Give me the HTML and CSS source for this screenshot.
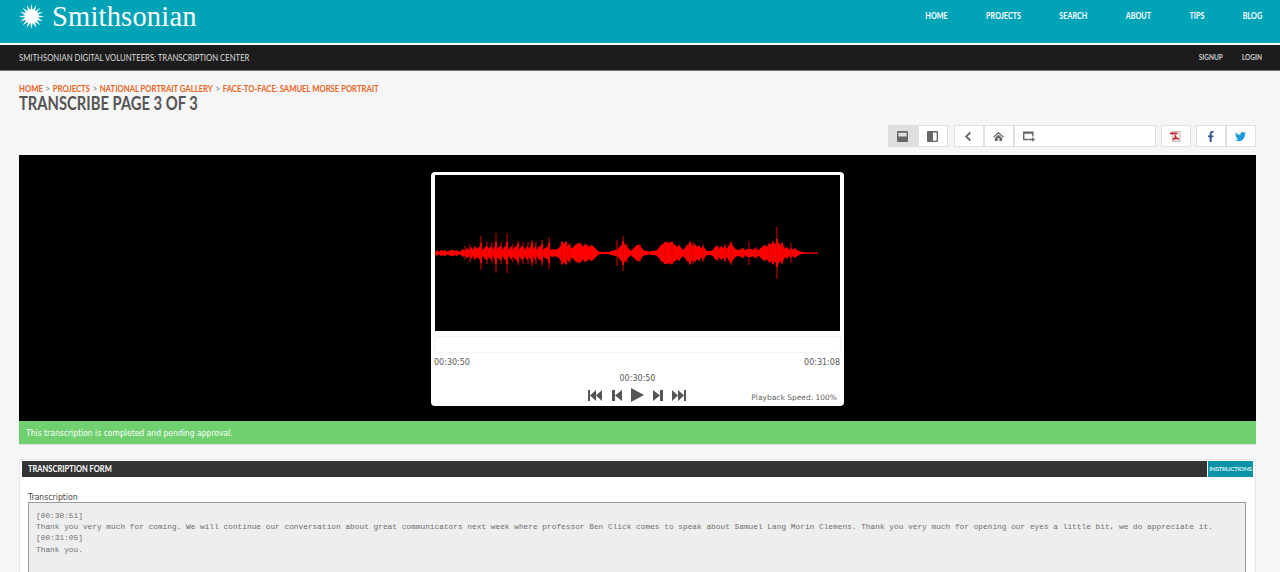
FILE: index.html
```html
<!DOCTYPE html>
<html lang="en">
<head>
<meta charset="utf-8">
<title>Transcribe Page 3 of 3</title>
<link rel="stylesheet" href="styles.css">
</head>
<body>
<header class="masthead">
  <a class="logo">
    <svg class="sun" viewBox="-14 -14 28 28" aria-hidden="true">
      <path fill="#fff" d="M0-13 1.270-6.370 5-12 3.610-5.400 9.200-9.200 5.400-3.610 12-5 6.370-1.270 13 0 6.370 1.270 12 5 5.400 3.610 9.200 9.200 3.610 5.400 5 12 1.270 6.370 0 13-1.270 6.370-5 12-3.610 5.400-9.200 9.200-5.400 3.610-12 5-6.370 1.270-13 0-6.370-1.270-12-5-5.400-3.610-9.200-9.200-3.610-5.400-5-12-1.270-6.370Z"/>
      <circle r="7" fill="#fff"/>
    </svg>
    <span class="wordmark">Smithsonian</span>
  </a>
  <nav class="mainnav">
    <a>HOME</a><a>PROJECTS</a><a>SEARCH</a><a>ABOUT</a><a>TIPS</a><a>BLOG</a>
  </nav>
</header>
<div class="subbar">
  <span class="subtitle">SMITHSONIAN DIGITAL VOLUNTEERS: TRANSCRIPTION CENTER</span>
  <nav class="usernav"><a>SIGNUP</a><a>LOGIN</a></nav>
</div>
<main class="page">
  <div class="crumbs"><a>HOME</a><i>&gt;</i><a>PROJECTS</a><i>&gt;</i><a>NATIONAL PORTRAIT GALLERY</a><i>&gt;</i><a>FACE-TO-FACE: SAMUEL MORSE PORTRAIT</a></div>
  <h1 class="title">TRANSCRIBE PAGE 3 OF 3</h1>

  <div class="toolbar">
    <div class="group first-group">
      <button class="tool active"><svg viewBox="0 0 12 12"><path fill="#666" fill-rule="evenodd" d="M1 0H11A1 1 0 0 1 12 1V11A1 1 0 0 1 11 12H1A1 1 0 0 1 0 11V1A1 1 0 0 1 1 0ZM1.500 2V6H10.500V2Z"/></svg></button>
      <button class="tool"><svg viewBox="0 0 12 12"><path fill="#666" fill-rule="evenodd" d="M1 0H11A1 1 0 0 1 12 1V11A1 1 0 0 1 11 12H1A1 1 0 0 1 0 11V1A1 1 0 0 1 1 0ZM6.500 1.500V10.500H10.500V1.500Z"/></svg></button>
    </div>
    <div class="group">
      <button class="tool"><svg viewBox="0 0 12 12"><path fill="none" stroke="#666" stroke-width="2" d="M8 1.500 3.500 6 8 10.500"/></svg></button>
      <button class="tool"><svg viewBox="0 0 12 12"><path fill="#666" d="M6 1 0 6.200 1 7.200 6 3 11 7.200 12 6.200ZM2 7.500V11H5V8H7V11H10V7.500L6 4Z"/></svg></button>
      <div class="gobox">
        <svg viewBox="0 0 13 12"><path fill="#666" fill-rule="evenodd" d="M0 .5H11.500V6H10V3H1.500V8.500H6V10H0Z"/><path fill="#666" d="M6.500 8.500H10V6.500L13 9.200 10 12V10H6.500Z"/></svg>
        <span class="goinput"></span>
      </div>
    </div>
    <div class="group">
      <button class="tool"><svg viewBox="0 0 12 12"><path fill="#f4e4e4" stroke="#b9a0a0" stroke-width=".8" d="M2.500.5H11V11.500H2.500Z"/><path fill="#c4242b" d="M0 1.500H8V3.500H5.600L7.800 7.500 10 8V9.500L7 8.700 3.500 9.800 2.500 8.500 5 7 5.200 3.500H0Z"/></svg></button>
    </div>
    <div class="group">
      <button class="tool"><svg viewBox="0 0 12 12"><path fill="#3b5998" d="M5 12V6.800H3.200V4.800H5V3.300C5 1.200 6.200 0 8 0H9.500V2H8.400C7.600 2 7.300 2.400 7.300 3.100V4.800H9.400L9.100 6.800H7.300V12Z"/></svg></button>
      <button class="tool"><svg viewBox="0 0 12 12"><path fill="#1b9bdc" d="M12 2.300C11.500 2.500 11 2.700 10.600 2.700 11.100 2.400 11.500 1.900 11.700 1.300 11.200 1.600 10.700 1.800 10.100 1.900 9.100.8 7.500.8 6.500 1.800 5.900 2.400 5.700 3.300 5.900 4.100 3.900 4 2.100 3 .8 1.500.1 2.600.5 4.100 1.600 4.800 1.200 4.800.8 4.700.5 4.500.5 5.800 1.400 6.800 2.500 7 2.100 7.100 1.800 7.100 1.400 7.100 1.800 8.100 2.700 8.800 3.800 8.800 2.700 9.600 1.400 10 0 9.900 4.900 12.900 11 9.800 10.800 3.500 11.300 3.100 11.700 2.800 12 2.300Z"/></svg></button>
    </div>
  </div>

  <section class="stage">
    <div class="player">
      <div class="wavewrap">
        <svg class="wave" viewBox="0 -78 405 156" aria-hidden="true">
          <defs>
            <path id="env" d="M0 0 0-1 2-3 4-1 6-3 8-2 10-3 12-1 14-2 16-3 18-3 20-2 22-3 24-1 26-2 28-4 30-2 32-5 34-3 36-6 38-3 40-7 42-4 44-6 46-6 48-3 50-6 52-7 54-4 56-7 58-3 60-7 62-4 64-6 66-7 68-3 70-7 72-6 74-3 76-7 78-3 80-6 82-7 84-3 86-6 88-7 90-3 92-7 94-4 96-7 98-3 100-7 102-3 104-7 106-6 108-3 110-5 112-6 114-5 116-3 118-4 120-3 122-4 124-5 126-8 128-9 130-10 132-6 134-9 136-5 138-5 140-8 142-9 144-10 146-9 148-6 150-9 152-8 154-6 156-8 158-7 160-5 162-3 164-1 166-1 168-1 170-1 172-1 174-1 176-2 178-2 180-3 182-3 184-5 186-8 188-7 190-9 192-6 194-4 196-2 198-4 200-6 202-8 204-8 206-6 208-3 210-2 212-2 214-1 216-2 218-2 220-2 222-3 224-5 226-8 228-9 230-10 232-11 234-10 236-11 238-9 240-8 242-6 244-8 246-5 248-3 250-5 252-8 254-9 256-8 258-7 260-9 262-6 264-8 266-4 268-7 270-4 272-2 274-2 276-2 278-3 280-6 282-7 284-4 286-7 288-5 290-7 292-4 294-8 296-9 298-7 300-4 302-3 304-3 306-4 308-5 310-2 312-4 314-4 316-4 318-3 320-5 322-3 324-3 326-5 328-7 330-8 332-6 334-9 336-9 338-8 340-9 342-10 344-10 346-7 348-8 350-4 352-6 354-3 356-5 358-3 360-5 362-3 364-2 366-1 368-1 370-.5 383-.2 383 0Z"/>
          </defs>
          <g class="wavefill">
            <use href="#env"/>
            <use href="#env" transform="scale(1 -1)"/>
          </g>
          <path class="spikes-mid" d="M46-10V10M61-11V11M72-11V11M83-9V9M97-10V10M107-9V9M114-10V10M127-11V11M131-11V11M188-12V12M230-11V11M237-11V11M255-11V11M296-10V10M338-11V11M342-14V14M347-10V10"/>
          <path class="spikes" d="M30-7V7M35-9V9M46-17V17M52-11V11M57-10V10M61-20V20M66-11V11M72-20V20M78-9V9M83-12V12M88-11V11M93-11V11M97-13V13M101-11V11M107-13V13M114-16V16M127-12V12M131-12V12M135-10V10M182-13V13M188-17V18M192-10V10M205-9V9M230-11V11M237-12V12M255-12V12M258-11V11M268-9V9M283-8V8M290-9V9M296-12V12M314-12V12M322-6V6M334-10V10M338-12V12M342-26V26M347-11V11M356-10V10"/>
        </svg>
      </div>
      <div class="progress"></div>
      <div class="times"><span>00:30:50</span><span>00:31:08</span></div>
      <div class="current">00:30:50</div>
      <div class="controls">
        <span></span>
        <div class="transport">
          <svg class="ctl first" viewBox="0 0 14 11"><path d="M0 0H2V11H0ZM8 0V11L2 5.500ZM14 0V11L8 5.500Z"/></svg>
          <svg class="ctl prev" viewBox="0 0 10 11"><path d="M0 0H3V11H0ZM10 0V11L3 5.500Z"/></svg>
          <svg class="ctl play" viewBox="0 0 13 14"><path d="M0 0 13 7 0 14Z"/></svg>
          <svg class="ctl next" viewBox="0 0 10 11"><path d="M10 0H7V11H10ZM0 0V11L7 5.500Z"/></svg>
          <svg class="ctl last" viewBox="0 0 14 11"><path d="M14 0H12V11H14ZM6 0V11L12 5.500ZM0 0V11L6 5.500Z"/></svg>
        </div>
        <span class="speed">Playback Speed: 100%</span>
      </div>
    </div>
  </section>

  <div class="notice">This transcription is completed and pending approval.</div>

  <section class="formpanel">
    <div class="panelhead">
      <h2 class="panelname"><span class="panelname-text">TRANSCRIPTION FORM</span></h2>
      <a class="instructions">INSTRUCTIONS</a>
    </div>
    <div class="panelbody">
      <div class="fieldlabel">Transcription</div>
      <div class="transcript">[00:30:51]
Thank you very much for coming. We will continue our conversation about great communicators next week where professor Ben Click comes to speak about Samuel Lang Morin Clemens. Thank you very much for opening our eyes a little bit, we do appreciate it.
[00:31:05]
Thank you.</div>
    </div>
  </section>
</main>
</body>
</html>
```

FILE: styles.css
```css
* { box-sizing: border-box; }
html, body { margin: 0; height: 572px; overflow: hidden; }
body {
  background: #f6f6f6;
  font-family: Lato, "Liberation Sans", sans-serif;
  color: #555;
}
.masthead {
  height: 45px;
  background: #01a4b7;
  border-bottom: 2px solid #fff;
  display: flex;
  justify-content: space-between;
  padding: 0 18px 0 18px;
}
.logo { display: flex; align-items: flex-start; }
.sun { width: 27px; height: 27px; margin-top: 3px; }
.wordmark {
  font-family: "Liberation Serif", serif;
  font-size: 28.500px;
  line-height: 33px;
  color: #fff;
  margin-left: 7px;
  letter-spacing: .2px;
}
.mainnav {
  display: flex;
  gap: 50.500px;
  padding-top: 10px;
  transform: scaleX(.76);
  transform-origin: right;
}
.mainnav a {
  color: #fff;
  font-weight: 700;
  font-size: 9.500px;
  line-height: 11px;
}
.subbar {
  height: 26px;
  background: #1c1c1c;
  border-bottom: 1px solid #777;
  display: flex;
  justify-content: space-between;
  align-items: center;
  padding: 0 18px 0 19px;
}
.subtitle {
  color: #ddd;
  font-size: 9px;
  transform: scaleX(.858);
  transform-origin: left;
}
.usernav { display: flex; gap: 19px; }
.usernav a { color: #ccc; font-size: 6.500px; font-weight: 700; }
.page { padding: 13px 24px 0 19px; }
.crumbs {
  display: flex;
  color: #e8651f;
  font-size: 9px;
  font-weight: 700;
  line-height: 10px;
  transform: scaleX(.855);
  transform-origin: left;
}
.crumbs i { font-style: normal; font-weight: 400; color: #777; margin: 0 3.200px; }
.title {
  margin: 0;
  font-size: 18px;
  line-height: 19px;
  font-weight: 700;
  color: #555;
  transform: scaleX(.82);
  transform-origin: left;
}
.toolbar {
  margin-top: 12px;
  display: flex;
  justify-content: flex-end;
  gap: 5px;
}
.group { display: flex; }
.first-group { margin-right: 1px; }
.tool, .gobox {
  height: 22px;
  background: #fff;
  border: 1px solid #e0e0e0;
  padding: 0;
  display: flex;
  align-items: center;
}
.tool { width: 30px; justify-content: center; padding-right: 1px; }
.tool.active { background: #dedede; }
.tool svg { width: 11px; height: 11px; }
.gobox { width: 142px; padding-left: 8px; }
.gobox svg { width: 12px; height: 11px; }
.stage {
  margin-top: 8px;
  height: 266px;
  background: #000;
  display: flex;
  justify-content: center;
  padding-top: 17px;
}
.player {
  width: 413px;
  height: 234px;
  background: #fff;
  border-radius: 4px;
  padding: 3px 3px 0 3px;
}
.wavewrap { height: 156px; background: #000; margin: 0 1px; }
.wave { display: block; width: 405px; height: 156px; }
.wavefill { fill: #f00; stroke: #f00; stroke-width: .3; }
.spikes { stroke: #e00000; stroke-width: 1; fill: none; }
.spikes-mid { stroke: #f00; stroke-width: 2.200; fill: none; }
.progress {
  height: 17px;
  margin-top: 5px;
  border: 1px solid #f3f3f3;
  border-radius: 3px;
}
.times {
  display: flex;
  justify-content: space-between;
  font-family: "DejaVu Sans", sans-serif;
  font-size: 8px;
  line-height: 10px;
  color: #555;
  margin-top: 5px;
  padding-right: 1px;
}
.current {
  text-align: center;
  font-family: "DejaVu Sans", sans-serif;
  font-size: 8px;
  line-height: 10px;
  color: #555;
  margin-top: 6px;
}
.controls {
  display: grid;
  grid-template-columns: 1fr auto 1fr;
  align-items: center;
  margin-top: 4px;
}
.transport { display: flex; align-items: center; gap: 9px; margin-right: 1px; }
.ctl { fill: #555; display: block; }
.first { margin-right: 1px; }
.first, .last { width: 14px; height: 11px; }
.prev, .next { width: 10px; height: 11px; }
.play { width: 13px; height: 14px; }
.speed {
  justify-self: end;
  font-family: "DejaVu Sans", sans-serif;
  font-size: 7.500px;
  color: #666;
  padding-right: 4px;
  margin-top: 4px;
}
.notice {
  height: 24px;
  background: #70d070;
  border-bottom: 1px solid #ddd;
  color: #fff;
  font-family: "DejaVu Sans Condensed", "DejaVu Sans", sans-serif;
  font-size: 8.500px;
  line-height: 25px;
  padding-left: 7px;
}
.formpanel {
  margin-top: 14px;
  height: 200px;
  background: #fff;
  border: 1px solid #e6e6e6;
  padding: 1px 2px;
}
.panelhead { display: flex; gap: 1px; height: 16px; }
.panelname {
  flex: 1;
  margin: 0;
  background: #333;
  color: #fff;
  font-size: 9px;
  font-weight: 700;
  line-height: 16px;
  padding-left: 6px;
}
.panelname-text {
  display: inline-block;
  transform: scaleX(.835);
  transform-origin: left;
}
.instructions {
  width: 45px;
  background: #0a93a8;
  color: #d5f0f4;
  font-size: 6.400px;
  font-weight: 700;
  letter-spacing: -.35px;
  line-height: 16px;
  text-align: center;
  white-space: nowrap;
}
.panelbody { padding: 15px 7px 0 6px; }
.fieldlabel {
  font-family: "DejaVu Sans Condensed", "DejaVu Sans", sans-serif;
  font-size: 8.600px;
  line-height: 10px;
  color: #444;
}
.transcript {
  height: 120px;
  background: #eee;
  border: 1px solid #999;
  padding: 7px;
  font-family: "Liberation Mono", monospace;
  font-size: 7.820px;
  line-height: 11.200px;
  color: #6e6e6e;
  white-space: pre-wrap;
}
```
